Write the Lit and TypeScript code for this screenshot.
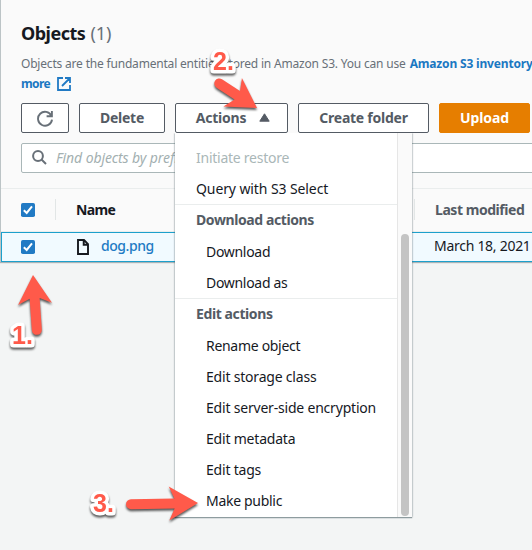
import { LitElement, html, svg, css } from "lit";
import { customElement, property } from "lit/decorators.js";

interface Group {
  title?: string;
  items: { label: string; disabled?: boolean; cls: string }[];
  cls?: string;
}

const GROUPS: Group[] = [
  { items: [{ label: "Initiate restore", disabled: true, cls: "w-initiate" }, { label: "Query with S3 Select", cls: "w-query" }] },
  { title: "Download actions", cls: "w-dla", items: [{ label: "Download", cls: "w-dl" }, { label: "Download as", cls: "w-dlas" }] },
  {
    title: "Edit actions",
    cls: "w-ea",
    items: [
      { label: "Rename object", cls: "w-ren" },
      { label: "Edit storage class", cls: "w-sto" },
      { label: "Edit server-side encryption", cls: "w-enc" },
      { label: "Edit metadata", cls: "w-meta" },
      { label: "Edit tags", cls: "w-tags" },
      { label: "Make public", cls: "w-pub" },
    ],
  },
];

@customElement("check-box")
export class CheckBox extends LitElement {
  static styles = css`
    :host { display: block; width: 14px; height: 14px; }
    svg { display: block; }
  `;
  render() {
    return html`<svg width="14" height="14" viewBox="0 0 14 14">
      <rect width="14" height="14" rx="1.8" fill="#217ac4" />
      <path d="M2.8 7.3 L5.7 10 L11 3.4" fill="none" stroke="#fff" stroke-width="2" />
    </svg>`;
  }
}

@customElement("actions-menu")
export class ActionsMenu extends LitElement {
  @property({ attribute: false }) groups: Group[] = GROUPS;
  static styles = css`
    :host { display: flex; box-sizing: border-box; width: 237px; height: 384px; background: #fff; box-shadow: 0 1px 1px #8e9c9f, 0 0 2px rgba(0, 28, 36, 0.45); color: #16191f; font-size: 14px; clip-path: inset(0 -4px -4px -4px); }
    .list { width: 222px; padding-top: 9px; box-sizing: border-box; }
    .group + .group { border-top: 1px solid #eaeded; }
    .row { height: 31px; line-height: 31px; padding-left: 21px; white-space: nowrap; }
    .title { font-weight: 700; color: #545b64; line-height: 29px; }
    .title ~ .row { padding-left: 31px; }
    .disabled { color: #aab7b8; }
    .track { box-sizing: border-box; width: 15px; border-left: 1px solid #e6e6e6; background: #fafafa; padding: 101px 3px 1px 3px; }
    .thumb { height: 282px; width: 8px; border-radius: 4px; background: #c4c4c4; }
    .w-initiate { letter-spacing: -0.25px; }
    .w-query { letter-spacing: -0.1px; }
    .w-dla, .w-ea { letter-spacing: -0.4px; }
    .w-dl, .w-dlas, .w-ren, .w-pub { letter-spacing: -0.3px; }
    .w-sto, .w-enc, .w-meta, .w-tags { letter-spacing: -0.2px; }
  `;
  render() {
    return html`
      <div class="list">
        ${this.groups.map(
          (g) => html`<div class="group">
            ${g.title ? html`<div class="row title"><span class=${g.cls ?? ""}>${g.title}</span></div>` : ""}
            ${g.items.map((i) => html`<div class="row ${i.disabled ? "disabled" : ""}"><span class=${i.cls}>${i.label}</span></div>`)}
          </div>`,
        )}
      </div>
      <div class="track"><div class="thumb"></div></div>
    `;
  }
}

@customElement("app-root")
export class AppRoot extends LitElement {
  static styles = css`
    :host { display: block; position: relative; width: 532px; height: 550px; overflow: hidden; background: #f3f5f5; font-family: "Noto Sans", "Open Sans", sans-serif; font-size: 14px; color: #16191f; white-space: nowrap; }
    * { box-sizing: border-box; }
    .panel { width: 620px; height: 262px; background: #fafafa; border-left: 1px solid #bcc4c6; box-shadow: 0 1px 1px rgba(0, 28, 36, 0.3); }
    .head { height: 188px; padding: 20px 0 0 20px; }
    .heading { height: 27px; line-height: 27px; font-size: 18px; font-weight: 700; }
    .h { letter-spacing: -0.5px; }
    .count { font-weight: 400; color: #687078; margin-left: 5px; letter-spacing: 0; }
    .desc { margin-top: 7px; font-size: 12px; line-height: 20px; color: #687078; }
    .d { letter-spacing: -0.19px; }
    .link { font-weight: 700; color: #1a78c2; }
    .inv { margin-left: 4px; letter-spacing: -0.17px; }
    .more { display: flex; align-items: center; height: 19px; gap: 7px; }
    .more span { letter-spacing: -0.6px; }
    .buttons { display: flex; gap: 10px; margin-top: 10px; }
    .btn { display: flex; align-items: center; justify-content: center; height: 30px; padding-bottom: 1px; border: 1px solid #545b64; border-radius: 2px; background: #fff; color: #545b64; font-weight: 700; }
    .refresh { width: 48px; }
    .delete { width: 86px; letter-spacing: -0.25px; }
    .actions { width: 113px; gap: 13px; padding-left: 3px; letter-spacing: -0.2px; }
    .create { width: 131px; letter-spacing: -0.25px; }
    .upload { width: 91px; background: #e67e00; border-color: #e67e00; color: #fff; letter-spacing: -0.1px; }
    .search { display: flex; align-items: center; gap: 9px; width: 600px; height: 30px; margin-top: 10px; padding: 0 0 1px 10px; border: 1px solid #aab7b8; border-radius: 2px; background: #fff; color: #a3b0b1; font-style: italic; }
    .ph { letter-spacing: -0.1px; }
    .thead { display: flex; align-items: center; height: 44px; padding: 0 0 1px 20px; border-top: 1px solid #eaeded; border-bottom: 1px solid #eaeded; font-weight: 700; }
    .rule { width: 1px; height: 21px; background: #e2e6e6; }
    .r1 { margin-left: 20px; }
    .name { width: 358px; padding-left: 20px; letter-spacing: -0.6px; }
    .mod { padding-left: 20px; color: #545b64; letter-spacing: -0.45px; }
    .trow { display: flex; align-items: center; height: 30px; padding: 0 0 1px 19px; border: 1px solid #1ca0cc; background: #f1faff; }
    .file { margin-left: 42px; }
    .fname { margin-left: 12px; width: 333px; color: #217ac4; font-weight: 500; letter-spacing: -0.45px; line-height: 18px; padding-bottom: 1px; }
    .date { letter-spacing: -0.28px; line-height: 18px; padding-bottom: 1px; }
    .menu { position: absolute; left: 175px; top: 133px; }
    .notes { position: absolute; left: 0; top: 0; }
    .shape { fill: #ff5a4a; }
    .num { font: 700 25px "Liberation Sans", sans-serif; fill: #ff5a4a; stroke: #fff; stroke-width: 7px; stroke-linejoin: round; paint-order: stroke; }
    .cast { filter: drop-shadow(0 2px 1.2px rgba(0, 0, 0, 0.65)); }
    svg { display: block; flex: none; }
  `;

  private arrow(x: number, y: number, angle: number, length: number) {
    const s = length;
    return svg`<g class="cast"><path class="shape" transform="translate(${x} ${y}) rotate(${angle})"
      d="M0 0 L-29 -17 L-23.5 -5 L${-s + 5} -5 A5 5 0 0 0 ${-s + 5} 5 L-23.5 5 L-29 17 Z" /></g>`;
  }

  render() {
    return html`
      <section class="panel">
        <div class="head">
          <div class="heading"><span class="h">Objects</span><span class="count">(1)</span></div>
          <div class="desc">
            <div><span class="d">Objects are the fundamental entities stored in Amazon S3. You can use</span><span class="link inv">Amazon S3 inventory</span></div>
            <div class="more link"><span>more</span>
              <svg width="14" height="14" viewBox="0 0 14 14" fill="none" stroke="#217ac4" stroke-width="1.8">
                <path d="M6 1H1V13H13V8M8 1H13V6M13 1L5 9" />
              </svg>
            </div>
          </div>
          <div class="buttons">
            <div class="btn refresh">
              <svg width="18" height="18" viewBox="0 0 18 18" fill="none" stroke="#687078" stroke-width="1.9">
                <path d="M15.9 2V7.2H10.6M15.4 6.8A7 7 0 1 0 16 10.6" />
              </svg>
            </div>
            <div class="btn delete">Delete</div>
            <div class="btn actions"><span>Actions</span>
              <svg width="11" height="9" viewBox="0 0 11 9"><path d="M5.5 .8L10.2 8.2H.8Z" fill="#545b64" stroke="#545b64" stroke-linejoin="round" /></svg>
            </div>
            <div class="btn create">Create folder</div>
            <div class="btn upload">Upload</div>
          </div>
          <div class="search">
            <svg width="15" height="15" viewBox="0 0 15 15" fill="none" stroke="#687078" stroke-width="2">
              <circle cx="6" cy="6" r="4.9" /><path d="M9.5 9.5L14 14" />
            </svg>
            <span class="ph">Find objects by prefix</span>
          </div>
        </div>
        <div class="thead">
          <check-box></check-box><div class="rule r1"></div>
          <div class="name">Name</div><div class="rule"></div><div class="mod">Last modified</div>
        </div>
        <div class="trow">
          <check-box></check-box>
          <svg class="file" width="12" height="16" viewBox="0 0 12 16" fill="none" stroke="#16191f" stroke-width="1.9">
            <path d="M1 1H7L11 5.2V15H1Z M6.7 1V5.8H11" />
          </svg>
          <span class="fname">dog.png</span><span class="date">March 18, 2021</span>
        </div>
      </section>
      <actions-menu class="menu"></actions-menu>
      <svg class="notes" width="532" height="550" viewBox="0 0 532 550">
        ${this.arrow(33, 275, -94, 60)}
        ${this.arrow(257, 108, 33, 50)}
        ${this.arrow(198, 503, -1, 72)}
        <g class="cast"><text class="num" x="12" y="344">1.</text></g>
        <g class="cast"><text class="num" x="213" y="70">2.</text></g>
        <g class="cast"><text class="num" x="93" y="512">3.</text></g>
      </svg>
    `;
  }
}
